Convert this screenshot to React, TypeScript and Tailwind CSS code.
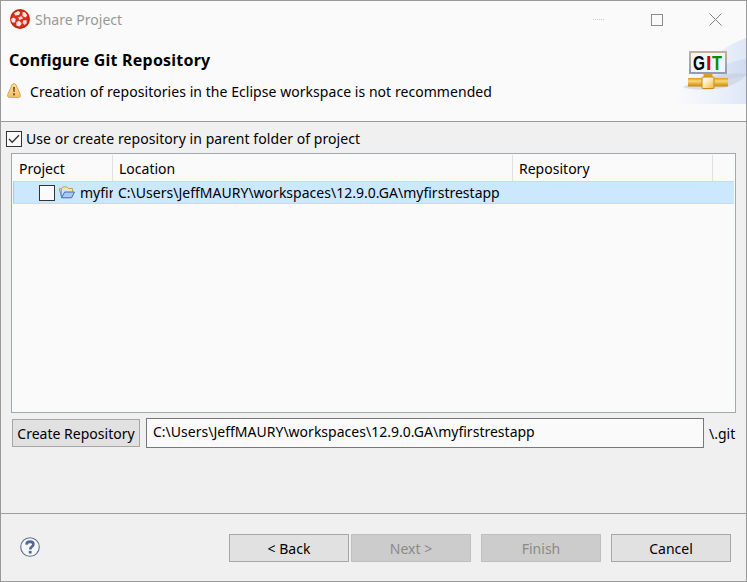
import type { ReactNode } from "react";

function AppIcon() {
  return (
    <svg width="20" height="20" viewBox="0 0 20 20" className="shrink-0">
      <circle cx="10" cy="10" r="10" fill="#d8301a" />
      <circle cx="10" cy="10" r="9" fill="none" stroke="#bd2210" strokeWidth="1" />
      <g fill="#f6e4e1">
        <path d="M4 4.200 8.400 2 10.200 3.400 9 6 5.400 6.600Z" />
        <path d="M12.600 3 15 3.200 17.200 6.200 15.600 8.600 12.400 7Z" />
        <path d="M1 10 3.400 8.600 5.800 10 5 13.600 2 13.600Z" />
        <path d="M8.200 8.200 11.600 7.200 13 9.600 9.400 11Z" />
        <path d="M6.200 13.400 9.200 11.400 11.800 14.800 9.400 17.400 6.400 16.400Z" />
        <path d="M13.200 11.400 16.400 11 16.800 14 14.600 16 12.600 14Z" />
      </g>
    </svg>
  );
}

function WarningIcon() {
  return (
    <svg width="14" height="15" viewBox="0 0 14 15" className="relative -top-0.5 shrink-0">
      <defs>
        <linearGradient id="warn" x1="0" y1="0" x2="0" y2="1">
          <stop offset="0" stopColor="#fbe0a0" />
          <stop offset="1" stopColor="#f3bf62" />
        </linearGradient>
      </defs>
      <path d="M5.200 1.500Q7-.5 8.800 1.500L13.300 11.500Q13.800 14.300 12 14.400H2Q.2 14.300.7 11.500Z" fill="url(#warn)" stroke="#d9a658" />
      <path d="M6 4h2l-.3 5h-1.400Z" fill="#7a5624" />
      <rect x="6" y="10.300" width="2" height="2" fill="#7a5624" />
    </svg>
  );
}

function FolderIcon() {
  return (
    <svg width="16" height="13" viewBox="0 0 16 13" className="shrink-0">
      <path d="M2.500 11.500V2.500H1M2.500 2.500 4 .9H8L9.300 2.500H13.500V5.500" fill="#f9e3a4" stroke="#c9a05a" />
      <path d="M2.500 11.800 5.600 6H15.400L12.600 11.800Z" fill="#a9c8f6" stroke="#4a67ac" />
      <path d="M.5 2.500 2.500 11.500" stroke="#6b7fb5" fill="none" />
    </svg>
  );
}

function GitBanner() {
  return (
    <svg width="71" height="66" viewBox="0 0 71 66" className="block">
      <defs>
        <linearGradient id="sky" x1="0" y1="0" x2="1" y2="0">
          <stop offset="0" stopColor="#fafafa" />
          <stop offset=".5" stopColor="#eef2fa" />
          <stop offset="1" stopColor="#dfe7f7" />
        </linearGradient>
        <linearGradient id="sky2" x1="0" y1="0" x2="1" y2="0">
          <stop offset="0" stopColor="#d9e2f5" stopOpacity="0" />
          <stop offset="1" stopColor="#d0dbf2" />
        </linearGradient>
        <linearGradient id="pipe" x1="0" y1="0" x2="0" y2="1">
          <stop offset="0" stopColor="#d69a1c" />
          <stop offset=".35" stopColor="#fbd873" />
          <stop offset="1" stopColor="#c98508" />
        </linearGradient>
        <linearGradient id="joint" x1="0" y1="0" x2="1" y2="1">
          <stop offset=".3" stopColor="#fff7dc" />
          <stop offset="1" stopColor="#eeb63c" />
        </linearGradient>
        <linearGradient id="frame" x1="0" y1="0" x2="0" y2="1">
          <stop offset="0" stopColor="#bfb392" />
          <stop offset="1" stopColor="#8c9eb9" />
        </linearGradient>
        <linearGradient id="shade" x1="0" y1="0" x2="1" y2="0">
          <stop offset="0" stopColor="#bcc3d3" stopOpacity=".5" />
          <stop offset="1" stopColor="#bcc3d3" stopOpacity=".4" />
        </linearGradient>
      </defs>
      <path d="M0 66Q4 50 17 37Q45 9 71 0V66Z" fill="url(#sky)" />
      <path d="M20 44Q48 24 71 21V38Q50 40 40 48Z" fill="url(#sky2)" />
      <path d="M8 49Q40 33 71 36Q68 44 48 50Q20 54 8 49Z" fill="url(#shade)" />
      <rect x="15" y="14" width="36" height="21" fill="#f1f5fb" stroke="url(#frame)" strokeWidth="2" />
      <g className="font-['Liberation_Sans'] text-[20px] font-bold">
        <text x="18" y="31.500" textLength="12" lengthAdjust="spacingAndGlyphs" fill="#000">G</text>
        <text x="31" y="31.500" fill="#d40000">I</text>
        <text x="37" y="31.500" textLength="10" lengthAdjust="spacingAndGlyphs" fill="#078a07">T</text>
      </g>
      <rect x="28.500" y="36" width="9" height="4" fill="#dba020" />
      <rect x="13" y="40" width="40" height="8.500" fill="url(#pipe)" />
      <rect x="27" y="39" width="12" height="11.500" rx="1" fill="url(#joint)" stroke="#c98a14" />
    </svg>
  );
}

function HelpIcon() {
  return (
    <svg width="20" height="20" viewBox="0 0 20 20" className="mb-0.5 shrink-0">
      <circle cx="10" cy="10" r="9.300" fill="#f5f7fa" stroke="#5c7193" strokeWidth="1.100" />
      <path d="M6.500 7.600Q6.600 4.600 10 4.600Q13.400 4.700 13.400 7.300Q13.400 8.700 11.700 9.800Q10.200 10.800 10.200 12.600" fill="none" stroke="#52688c" strokeWidth="2.600" />
      <rect x="8.800" y="13.900" width="2.800" height="2.600" fill="#52688c" />
    </svg>
  );
}

function Button({ children, disabled = false, className = "" }: { children: ReactNode; disabled?: boolean; className?: string }) {
  return (
    <button
      disabled={disabled}
      className={`h-7 w-[120px] border text-center leading-[28px] ${
        disabled ? "border-[#bfbfbf] bg-[#cccccc] text-[#8a8a8a]" : "border-[#a6a6a6] bg-[#e1e1e1]"
      } ${className}`}
    >
      {children}
    </button>
  );
}

export default function App() {
  return (
    <div className="flex h-[582px] w-[747px] flex-col overflow-hidden border border-[#999999] bg-[#f0f0f0] font-['Noto_Sans','Open_Sans',sans-serif] text-[14px] leading-5 tracking-[0.01px] whitespace-nowrap text-black">
      <header className="flex h-[121px] shrink-0 justify-between border-b border-[#999999] bg-[#fafafa]">
        <div className="flex flex-col">
          <div className="mt-2 ml-[9px] flex h-5 items-center gap-[5px] text-[#999999]">
            <AppIcon />
            <span className="pt-0.5">Share Project</span>
          </div>
          <h1 className="mt-[21px] ml-2 text-[16px] leading-5 font-bold tracking-[0.21px]">Configure Git Repository</h1>
          <div className="mt-3 ml-1.5 flex items-center gap-[9px]">
            <WarningIcon />
            <span className="tracking-[0.05px]">Creation of repositories in the Eclipse workspace is not recommended</span>
          </div>
        </div>
        <div className="flex flex-col items-end">
          <div className="flex h-[37px] items-center gap-[47px] pr-[23px]">
            <span className="w-[11px] border-t border-dotted border-[#cccccc]" />
            <span className="h-3 w-3 border border-[#8a8a8a]" />
            <svg width="13" height="13" viewBox="0 0 13 13" stroke="#858585" fill="none" className="mr-px -ml-px">
              <path d="M.5.5 12.500 12.500M12.500.5.5 12.500" />
            </svg>
          </div>
          <GitBanner />
        </div>
      </header>

      <main className="flex h-[391px] shrink-0 flex-col px-[10px] pt-[7px]">
        <label className="-ml-[5px] flex h-5 items-center gap-1">
          <span className="flex h-4 w-4 items-center justify-center border border-[#333333] bg-[#fafafa]">
            <svg width="12" height="10" viewBox="0 0 12 10" fill="none" stroke="#333333" strokeWidth="1.300">
              <path d="M1 5 4.200 8.300 11 1.300" />
            </svg>
          </span>
          <span className="tracking-[0.07px]">Use or create repository in parent folder of project</span>
        </label>

        <section className="mt-1 h-[260px] w-[725px] border border-[#a3a7af] bg-[#fafafa] p-px">
          <div className="flex h-[26px] items-center">
            <div className="h-full w-[100px] border-r border-[#e0e0e0] pl-1.5 leading-[27px]">Project</div>
            <div className="h-full w-[400px] border-r border-[#e0e0e0] pl-1.5 leading-[27px]">Location</div>
            <div className="h-full w-[200px] border-r border-[#e0e0e0] pl-1.5 leading-[27px]">Repository</div>
          </div>
          <div className="flex h-[23px] items-center border border-[#cce8ff] border-y-[#b8dfff] border-l-[#99d1ff] bg-[#cce8ff]">
            <div className="flex w-[99px] items-center overflow-hidden pl-[25px]">
              <span className="h-4 w-4 shrink-0 border border-[#333333] bg-[#fafafa]" />
              <span className="ml-1">
                <FolderIcon />
              </span>
              <span className="ml-[5px]">myfir</span>
            </div>
            <span className="ml-[5px]">C:\Users\JeffMAURY\workspaces\12.9.0.GA\myfirstrestapp</span>
          </div>
        </section>

        <div className="mt-[5px] flex h-[30px] items-center">
          <Button className="ml-px w-[128px]!">Create Repository</Button>
          <div className="ml-1.5 h-[30px] w-[558px] border border-[#777777] bg-[#fafafa] pl-1.5 leading-[25px]">
            C:\Users\JeffMAURY\workspaces\12.9.0.GA\myfirstrestapp
          </div>
          <span className="ml-[5px] pt-0.5">\.git</span>
        </div>
      </main>

      <footer className="flex flex-1 items-center border-t border-[#9b9f99] pr-[15px] pl-[19px]">
        <HelpIcon />
        <div className="flex flex-1 justify-end">
          <Button>&lt; Back</Button>
          <Button disabled className="ml-0.5">Next &gt;</Button>
          <Button disabled className="ml-2.5">Finish</Button>
          <Button className="ml-2.5">Cancel</Button>
        </div>
      </footer>
    </div>
  );
}
